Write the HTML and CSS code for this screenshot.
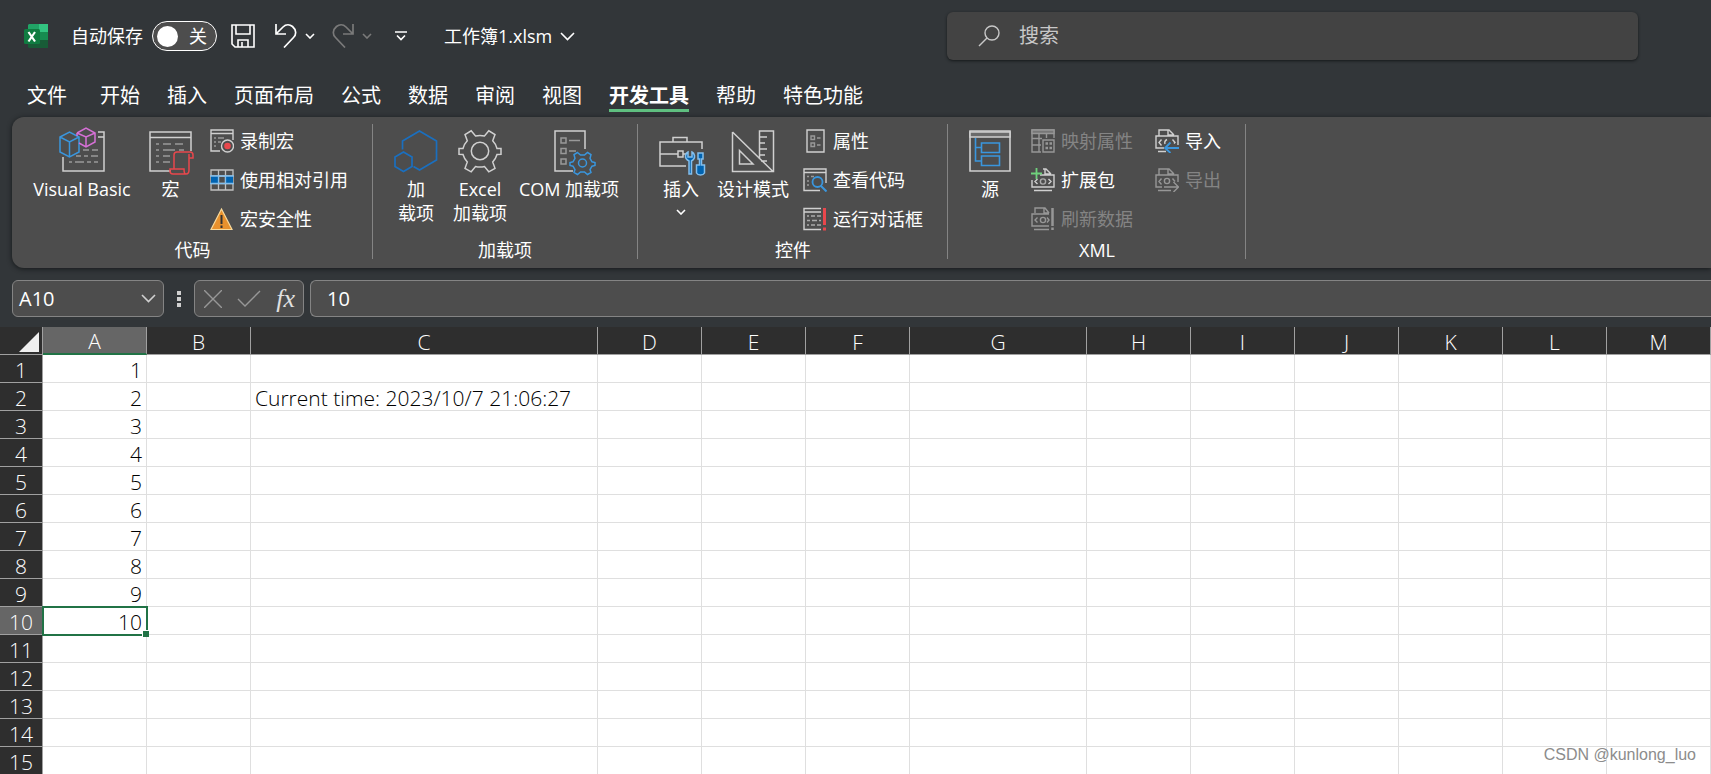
FILE: index.html
```html
<!DOCTYPE html>
<html lang="zh-CN">
<head>
<meta charset="utf-8">
<title>工作簿1.xlsm - Excel</title>
<link rel="stylesheet" href="styles.css">
</head>
<body>
<svg class="defs" aria-hidden="true">
  <symbol id="chev" viewBox="0 0 10 6"><path d="M1 1l4 4 4-4" fill="none" stroke="currentColor" stroke-width="1.6"/></symbol>
</svg>
<div class="app">
  <header class="titlebar">
    <div class="quick">
      <svg class="logo" viewBox="0 0 24 24"><path d="M5 0h10v8H4V1z" fill="#21a366"/><path d="M15 0h9v8h-9z" fill="#33c481"/><path d="M4 8h11v8H4z" fill="#107c41"/><path d="M15 8h9v8h-9z" fill="#21a366"/><path d="M15 8h9v8h-9z" fill="#107c41" opacity=".6"/><path d="M4 16h20v8H5l-1-1z" fill="#185c37"/><rect y="5" width="16" height="15" rx="1.500" fill="#107c41"/><path d="M4.500 8l6.500 9.500M11 8l-6.500 9.500" stroke="#fff" stroke-width="2.200"/></svg>
      <span class="autosave-label" id="autosave">自动保存</span>
      <button class="toggle" role="switch" aria-checked="false" aria-labelledby="autosave"><span class="knob"></span>关</button>
      <button class="icon-btn save" aria-label="保存"><svg width="24" height="24" viewBox="0 0 24 24" fill="none" stroke="#fff" stroke-width="1.600"><path d="M1 1h22v22H4l-3-3zM5 1v9h14V1M7 23v-7h10v7M11 18v5"/></svg></button>
      <button class="icon-btn" aria-label="撤消"><svg width="22" height="24" viewBox="0 0 22 24" fill="none" stroke="#fff" stroke-width="1.700"><path d="M1 0v10h10M1 10l7-7c3-3 7-2.500 9.500-.5 4 3.500 4 8 1 11L9 23.500"/></svg></button>
      <button class="icon-btn mini" aria-label="撤消选项"><svg width="10" height="6"><use href="#chev"/></svg></button>
      <button class="icon-btn dim redo" aria-label="恢复" disabled><svg width="22" height="24" viewBox="0 0 22 24" fill="none" stroke="currentColor" stroke-width="1.700"><path d="M21 0v10H11M21 10l-7-7c-3-3-7-2.500-9.500-.5-4 3.500-4 8-1 11l9.500 10"/></svg></button>
      <button class="icon-btn dim mini" aria-label="恢复选项" disabled><svg width="10" height="6"><use href="#chev"/></svg></button>
      <button class="icon-btn customize" aria-label="自定义"><svg width="12" height="10" viewBox="0 0 12 10" fill="none" stroke="#fff" stroke-width="1.600"><path d="M0 1h12M2 4.500l4 4 4-4"/></svg></button>
      <button class="filename">工作簿1.xlsm<svg width="15" height="9" viewBox="0 0 15 9" fill="none" stroke="#fff" stroke-width="1.600"><path d="M1 1l6.500 6.500L14 1"/></svg></button>
    </div>
    <label class="search"><svg width="22" height="22" viewBox="0 0 22 22" fill="none" stroke="#c8c8c8" stroke-width="1.400"><circle cx="14" cy="8" r="7"/><path d="M9 13l-8 8"/></svg><input type="text" placeholder="搜索" aria-label="搜索"></label>
  </header>
  <nav class="tabs">
    <button class="file">文件</button><button>开始</button><button>插入</button><button>页面布局</button><button>公式</button><button>数据</button><button>审阅</button><button>视图</button><button class="active">开发工具</button><button>帮助</button><button>特色功能</button>
  </nav>
  <section class="ribbon">
    <div class="group">
      <div class="tools">
        <button class="big w-xl"><svg viewBox="0 0 46 46" fill="none" stroke-width="1.500"><path d="M39 5h6v39H4V30M39 10h6" stroke="#d0d0d0"/><path d="M33 23h6M25 29h4M32 29h7M17 29h5M10 35h3M16 35h9M28 35h4M35 35h4M24 23h6" stroke="#999"/><path d="M1 10l9.500-5 9.500 5v15l-9.500 5L1 25zM1 10l9.500 5 9.500-5M10.500 15v15" stroke="#3a96dd"/><path d="M18 6l9-5 9 5v9l-9 5-7-4M18 6v3M18 6l9 4 9-4M27 10v10" stroke="#d670d6"/></svg>Visual Basic</button>
        <button class="big w-s"><svg viewBox="0 0 46 46" fill="none" stroke-width="1.500"><path d="M23 44H2V5h41v19M2 10.500h41" stroke="#d0d0d0"/><path d="M8 17h3M15 17h8M27 17h8M8 23h3M15 23h12M31 23h5M8 29h3M15 29h7M8 35h3M15 35h7" stroke="#999"/><path d="M26 42V28q0-3 3-3h13q3 0 3 3v3h-4v12q0 4-3 4H25q-3 0-3-3v-2h14q0 5 2 5M41 31v-4" stroke="#e8474c"/></svg>宏</button>
        <div class="stack">
          <button class="small"><svg viewBox="0 0 24 24" fill="none"><path d="M10 22H1V1h22v10M1 4.500h22" stroke="#d0d0d0" stroke-width="1.400"/><path d="M4 9h2M8 9h6M4 13h2M8 13h3M4 17h2" stroke="#999" stroke-width="1.300"/><circle cx="17.500" cy="17" r="6" stroke="#d0d0d0" stroke-width="1.400"/><circle cx="17.500" cy="17" r="3.300" fill="#e8474c"/></svg>录制宏</button>
          <button class="small"><svg viewBox="0 0 24 24" fill="none"><path d="M1 2h22v20H1zM8.500 2v20M15.500 2v20M1 8h22M1 15.500h22" stroke="#c0c0c0" stroke-width="1.300"/><path d="M1 8h7.500v7.500H1zM15.500 8H23v7.500h-7.500z" fill="#0063b1"/><path d="M0 8h24M0 15.500h24M8.500 8v7.500M15.500 8v7.500" stroke="#83beec" stroke-width="1.300"/></svg>使用相对引用</button>
          <button class="small"><svg viewBox="0 0 24 24"><path d="M11.500 2L22 22.500H1z" fill="#e8912d" stroke="#f8d99b" stroke-width="1.200"/><path d="M11.500 8v9M11.500 18.500v2.500" stroke="#333" stroke-width="2"/></svg>宏安全性</button>
        </div>
      </div>
      <div class="caption">代码</div>
    </div>
    <div class="group">
      <div class="tools">
        <button class="big"><svg viewBox="0 0 46 46" fill="none" stroke="#1a6fbf" stroke-width="1.700"><path d="M9.500 22.500V14L26.500 4 43.500 14v19l-17 10-6-3.500M2 30l8.500-5 8.500 5v9.500l-8.500 5-8.500-5z"/></svg>加<br>载项</button>
        <button class="big"><svg viewBox="0 0 46 46" fill="none" stroke="#d0d0d0" stroke-width="1.500"><circle cx="23" cy="24" r="8.700"/><path d="M14.200 3.800L18.500 9q4.500-1.200 9 0l4.300-5.200 6.200 3.700-2.300 6.300q3.200 3.300 4.300 7.700h4v5.700l-4 .3q-1.200 4.200-4.300 7.500l2.300 6.300-6.200 3.500-4.300-5.300q-4.500 1.200-9 0l-4.300 5.300L8 41.300l2.300-6.300q-3.100-3.300-4.300-7.500l-4-.3v-5.700h4q1.100-4.400 4.300-7.700L8 7.500z"/></svg>Excel<br>加载项</button>
        <button class="big w-l"><svg viewBox="-6 0 46 46" fill="none" stroke-width="1.500"><path d="M21 44H3V4h30v18" stroke="#d0d0d0"/><path d="M9 11h5v5H9zM9 21.500h5v5H9zM9 32h5v5H9zM17 13.500h11M17 24h7" stroke="#999"/><g stroke="#3a96dd"><circle cx="30.500" cy="36" r="4"/><path d="M25.500 25.500l3 2.500h4l3-2.500 3.500 2-1 4 2 3.300 3 .7v3l-3 .7-2 3.300 1 3-3.500 2-3-2.500h-4l-3 2.500-3.500-2 1-3-2-3.300-3-.7v-3l3-.7 2-3.300-1-4z"/></g></svg>COM 加载项</button>
      </div>
      <div class="caption">加载项</div>
    </div>
    <div class="group">
      <div class="tools">
        <button class="big"><svg viewBox="0 0 46 46" fill="none" stroke-width="1.500"><path d="M28 39H2V15h42v7M2 27h18M25 27h3M15 15v-4.500h14V15M20 24h5v6h-5z" stroke="#d0d0d0"/><path d="M31 47V34q-4-2-3.500-5.500.5-2.500 2.500-3.500v5h4v-5q2 1 2.500 3.500Q37 32 33.500 34v13z" fill="#0063b1" stroke="#83beec"/><path d="M40 26h5v6h-1.500v6h3v8q-1 2-4 2t-4-2v-8h3v-6H40z" fill="#0063b1" stroke="#83beec"/></svg>插入<svg class="drop" viewBox="0 0 10 6"><use href="#chev"/></svg></button>
        <button class="big w-m"><svg viewBox="0 0 46 46" fill="none" stroke="#d0d0d0" stroke-width="1.500"><path d="M2.500 5v39.500h41V4h-14v28M2.500 5L43 44.500M9.500 23.500V37H23zM30 10h7M30 16h5M30 22h7M30 28h5M31 34h6"/></svg>设计模式</button>
        <div class="stack">
          <button class="small"><svg viewBox="0 0 24 24" fill="none"><path d="M4 1h17v22H4z" stroke="#d0d0d0" stroke-width="1.400"/><path d="M8 7h3.500v3.500H8zM8 14h3.500v3.500H8zM14 9h3.500M14 16h3.500" stroke="#999" stroke-width="1.400"/></svg>属性</button>
          <button class="small"><svg viewBox="0 0 24 24" fill="none"><path d="M17 22.500H1V1h22v14M1 4.500h22" stroke="#d0d0d0" stroke-width="1.400"/><path d="M4 8.500h2M8 8.500h3M4 13h2M4 17h2" stroke="#999" stroke-width="1.400"/><circle cx="14.500" cy="14" r="5" stroke="#3a96dd" stroke-width="1.800"/><path d="M18 18l5.500 5.500" stroke="#3a96dd" stroke-width="2"/></svg>查看代码</button>
          <button class="small"><svg viewBox="0 0 24 24" fill="none"><path d="M18 22.500H1V1.500h17M1 5h17" stroke="#d0d0d0" stroke-width="1.400"/><path d="M4 9h2M8 9h4M14 9h4M4 13.500h3M9 13.500h5M16 13.500h2M4 18h2M8 18h4M14 18h4" stroke="#aaa" stroke-width="1.300"/><path d="M21.500 1v17M21.500 20.500v3" stroke="#e8474c" stroke-width="3"/></svg>运行对话框</button>
        </div>
      </div>
      <div class="caption">控件</div>
    </div>
    <div class="group">
      <div class="tools">
        <button class="big w-source"><svg viewBox="0 0 46 46" fill="none" stroke-width="1.600"><path d="M3 4h40v40H3z" stroke="#d0d0d0"/><path d="M3 5h40v5H3z" fill="#6b6b6b" stroke="#d0d0d0"/><path d="M8.500 11v23H14M8.500 20.500H14M14.500 16h18v9.500h-18zM14.500 29h18v9.500h-18z" stroke="#3a96dd"/></svg>源</button>
        <div class="stack">
          <button class="small" disabled><svg viewBox="0 0 24 24" fill="none" stroke="#979797" stroke-width="1.400"><path d="M10 23H1V1h22v8M1 9.500h10M1 16h9M8 4v19M15.500 4v5M12 11h11v12H12z"/><path d="M1 1h22v3.500H1z" fill="#777"/><path d="M14.500 14.500h2.500M18.500 14.500h2.500M14.500 19h2.500M18.500 19h2.500" stroke-width="2.500"/></svg>映射属性</button>
          <button class="small"><svg viewBox="0 0 24 24" class="xml-on"><path d="M12 1h3l5 5M14 1v5h6M1 12v7h22V7H9M3 22.500h18M6.500 11L4 13.500 6.500 16M17.500 11l2.500 2.500-2.500 2.500" fill="none" stroke="currentColor" stroke-width="1.400"/><circle cx="12" cy="13.500" r="2.600" fill="none" stroke="#aaa" stroke-width="1.400"/><path d="M5.500 0v11M0 5.500h11" stroke="#6fd17c" stroke-width="1.800"/></svg>扩展包</button>
          <button class="small" disabled><svg viewBox="0 0 24 24" fill="none" stroke="#979797" stroke-width="1.400"><path d="M4 6V1h10l4 5M13 1v5h5M18 7H1v12h17M3 22.500h15M6.500 10.500L4 13l2.500 2.500M16 10.500l2 2.500-2 2.500"/><circle cx="12" cy="13" r="2.600"/><path d="M21.500 1v18M21.500 20.500V23" stroke-width="2.500"/></svg>刷新数据</button>
        </div>
        <div class="stack second">
          <button class="small"><svg viewBox="0 0 24 24" fill="none" stroke="#d0d0d0" stroke-width="1.400"><path d="M4 7V1h10l5 5M13 1v5h6M9 19H1V7h22v9M3 22.500h8M6.500 10.500L4 13.500l2.500 3M10 15q-1-3 2-4.500M17.500 10.500l2.500 3-1 1"/><path d="M24 19H10.500M15.500 13.500L10 19l5.500 5" stroke="#3a96dd" stroke-width="1.800"/></svg>导入</button>
          <button class="small" disabled><svg viewBox="0 0 24 24" fill="none" stroke="#979797" stroke-width="1.400"><path d="M4 7V1h10l5 5M13 1v5h6M7 19H1V7h22v7M3 22.500h13M6.500 10.500L4 13.500l2.500 3M17.500 10.500l2.500 3"/><circle cx="12" cy="13" r="2.600"/><path d="M9 19h14M18.500 14l5 5-5 5"/></svg>导出</button>
        </div>
      </div>
      <div class="caption">XML</div>
    </div>
  </section>
  <section class="formula-bar">
    <button class="namebox">A10<svg width="15" height="9" viewBox="0 0 15 9" fill="none" stroke="#d0d0d0" stroke-width="1.600"><path d="M1 1l6.500 6.500L14 1"/></svg></button>
    <svg class="grip" width="4" height="16" viewBox="0 0 4 16"><path d="M0 0h4v4H0zM0 6h4v4H0zM0 12h4v4H0z" fill="#d0d0d0"/></svg>
    <div class="entry">
      <button aria-label="取消"><svg width="18" height="18" viewBox="0 0 18 18" fill="none" stroke="#979797" stroke-width="1.400"><path d="M0 0l18 18M18 0L0 18"/></svg></button>
      <button aria-label="输入"><svg width="24" height="18" viewBox="0 0 24 18" fill="none" stroke="#979797" stroke-width="1.400"><path d="M1 9l7 7L23 1"/></svg></button>
      <button class="fx" aria-label="插入函数">fx</button>
    </div>
    <input class="formula" type="text" value="10" aria-label="编辑栏">
  </section>
  <main class="sheet">
    <table>
      <colgroup><col class="c-row"><col class="c-std"><col class="c-std"><col class="c-wide"><col class="c-std"><col class="c-std"><col class="c-std"><col class="c-mid"><col class="c-std"><col class="c-std"><col class="c-std"><col class="c-std"><col class="c-std"><col class="c-std"></colgroup>
      <thead><tr><th class="corner"><svg width="20" height="20" viewBox="0 0 20 20"><path d="M20 0v20H0z" fill="#f0f0f0"/></svg></th><th class="sel">A</th><th>B</th><th>C</th><th>D</th><th>E</th><th>F</th><th>G</th><th>H</th><th>I</th><th>J</th><th>K</th><th>L</th><th>M</th></tr></thead>
      <tbody>
        <tr><th>1</th><td class="num">1</td><td></td><td></td><td></td><td></td><td></td><td></td><td></td><td></td><td></td><td></td><td></td><td></td></tr>
        <tr><th>2</th><td class="num">2</td><td></td><td>Current time: 2023/10/7 21:06:27</td><td></td><td></td><td></td><td></td><td></td><td></td><td></td><td></td><td></td><td></td></tr>
        <tr><th>3</th><td class="num">3</td><td></td><td></td><td></td><td></td><td></td><td></td><td></td><td></td><td></td><td></td><td></td><td></td></tr>
        <tr><th>4</th><td class="num">4</td><td></td><td></td><td></td><td></td><td></td><td></td><td></td><td></td><td></td><td></td><td></td><td></td></tr>
        <tr><th>5</th><td class="num">5</td><td></td><td></td><td></td><td></td><td></td><td></td><td></td><td></td><td></td><td></td><td></td><td></td></tr>
        <tr><th>6</th><td class="num">6</td><td></td><td></td><td></td><td></td><td></td><td></td><td></td><td></td><td></td><td></td><td></td><td></td></tr>
        <tr><th>7</th><td class="num">7</td><td></td><td></td><td></td><td></td><td></td><td></td><td></td><td></td><td></td><td></td><td></td><td></td></tr>
        <tr><th>8</th><td class="num">8</td><td></td><td></td><td></td><td></td><td></td><td></td><td></td><td></td><td></td><td></td><td></td><td></td></tr>
        <tr><th>9</th><td class="num">9</td><td></td><td></td><td></td><td></td><td></td><td></td><td></td><td></td><td></td><td></td><td></td><td></td></tr>
        <tr><th class="sel">10</th><td class="num current">10<span class="handle"></span></td><td></td><td></td><td></td><td></td><td></td><td></td><td></td><td></td><td></td><td></td><td></td><td></td></tr>
        <tr><th>11</th><td></td><td></td><td></td><td></td><td></td><td></td><td></td><td></td><td></td><td></td><td></td><td></td><td></td></tr>
        <tr><th>12</th><td></td><td></td><td></td><td></td><td></td><td></td><td></td><td></td><td></td><td></td><td></td><td></td><td></td></tr>
        <tr><th>13</th><td></td><td></td><td></td><td></td><td></td><td></td><td></td><td></td><td></td><td></td><td></td><td></td><td></td></tr>
        <tr><th>14</th><td></td><td></td><td></td><td></td><td></td><td></td><td></td><td></td><td></td><td></td><td></td><td></td><td></td></tr>
        <tr><th>15</th><td></td><td></td><td></td><td></td><td></td><td></td><td></td><td></td><td></td><td></td><td></td><td></td><td></td></tr>
      </tbody>
    </table>
    <div class="watermark">CSDN @kunlong_luo</div>
  </main>
</div>
</body>
</html>
```
FILE: styles.css
```css
* { box-sizing: border-box; }
body {
  margin: 0;
  background: #323639;
  color: #fff;
  font: 18px/24px "Open Sans", "Noto Sans CJK SC", sans-serif;
}
button, input { font: inherit; color: inherit; background: none; border: 0; padding: 0; margin: 0; }
svg { display: block; flex: none; }
.defs { position: absolute; width: 0; height: 0; }
.app { height: 100vh; overflow: hidden; display: flex; flex-direction: column; }

.titlebar { display: flex; justify-content: space-between; align-items: center; padding: 12px 73px 0 24px; }
.quick { display: flex; align-items: center; }
.logo { width: 24px; height: 24px; }
.autosave-label { margin-left: 23px; }
.toggle {
  display: flex; align-items: center; justify-content: space-between;
  width: 65px; height: 30px; margin-left: 9px; padding: 0 9px 0 4px;
  border: 1px solid #fff; border-radius: 15px; background: #4d4d4d;
}
.knob { width: 21px; height: 21px; border-radius: 50%; background: #fff; }
.icon-btn { display: flex; align-items: center; margin-left: 8px; }
.save { margin: 0 12px 0 14px; }
.redo { margin-left: 17px; }
.customize { margin-left: 23px; }
.dim { color: #7a7a7a; }
.filename { display: flex; align-items: center; gap: 8px; margin-left: 37px; }
.search {
  display: flex; align-items: center; gap: 19px;
  width: 691px; height: 48px; padding: 0 31px;
  border-radius: 6px; background: #434343; box-shadow: 0 1px 3px #15181a;
}
.search input { flex: 1; min-width: 0; font-size: 20px; outline: 0; }
.search input::placeholder { color: #c8c8c8; opacity: 1; }

.tabs { display: flex; gap: 27px; padding: 22px 27px 5px; }
.tabs button { font-size: 20px; line-height: 27px; border-bottom: 3px solid transparent; white-space: nowrap; }
.tabs .file { margin-right: 6px; }
.tabs .active { font-weight: 700; border-color: #5fbf80; }

.ribbon {
  display: flex; margin-left: 12px; padding: 7px 0 9px;
  border-radius: 12px 0 0 12px; background: #4d4d4d; box-shadow: 0 1px 5px #15181a;
}
.group { display: flex; flex-direction: column; gap: 5px; padding: 0 24px 0 13px; border-right: 1px solid #848484; }
.group:nth-child(2) { padding-right: 13px; }
.tools { display: flex; gap: 4px; height: 112px; }
.caption { padding-left: 12px; text-align: center; line-height: 18px; }
.group:nth-child(2) .caption { padding-left: 0; }
.big { padding-top: 3px; width: 60px; white-space: nowrap; align-self: flex-start; }
.big svg { width: 46px; height: 46px; margin: 0 auto 4px; overflow: visible; }
.big .drop { width: 10px; height: 6px; margin: 8px auto 0; }
.w-xl { width: 114px; }
.w-l { width: 110px; }
.w-m { width: 76px; }
.w-s { width: 55px; }
.w-source { width: 58px; }
.stack { display: flex; flex-direction: column; gap: 5px; margin-left: 8px; }
.second { margin-left: 18px; }
.small { display: flex; align-items: center; gap: 6px; height: 34px; white-space: nowrap; }
.small svg { width: 24px; height: 24px; }
.small:disabled { color: #848484; }
.xml-on { color: #d0d0d0; }

.formula-bar { display: flex; align-items: center; padding: 12px 0 10px 12px; }
.namebox, .entry, .formula { height: 37px; border: 1px solid #848484; border-radius: 6px; background: #4d4d4d; }
.namebox, .formula { font-size: 20px; }
.namebox { display: flex; align-items: center; justify-content: space-between; width: 152px; padding: 0 7px 0 6px; }
.grip { margin: 0 13px; }
.entry { display: flex; align-items: center; justify-content: space-between; width: 110px; padding: 0 8px 0 9px; margin-right: 6px; }
.fx { font: italic 26px/30px "Liberation Serif", serif; color: #e0e0e0; }
.formula { flex: 1; min-width: 0; padding: 0 16px; border-right: 0; border-radius: 6px 0 0 6px; outline: 0; }

.sheet { position: relative; flex: 1; min-height: 0; overflow: hidden; background: #fff; color: #000; }
table { width: 100%; table-layout: fixed; border-collapse: separate; border-spacing: 0; font: 300 21px/24px "Open Sans", "Noto Sans CJK SC", sans-serif; }
.c-row { width: 43px; }
.c-std { width: 104px; }
.c-wide { width: 347px; }
.c-mid { width: 177px; }
th, td { height: 28px; padding: 2px 4px 0; border-right: 1px solid #dfdfdf; border-bottom: 1px solid #dfdfdf; white-space: nowrap; }
th { padding: 2px 0 0; background: #2e2e2e; color: #fff; font-weight: 300; border-color: #a0a0a0; }
.sel { background: #666; }
thead .sel { border-bottom: 2px solid #217346; }
.corner svg { margin-left: 19px; }
.num { text-align: right; }
.current { position: relative; outline: 2px solid #217346; outline-offset: -1px; }
.handle { position: absolute; right: -3px; bottom: -3px; width: 7px; height: 7px; background: #217346; border: solid #fff; border-width: 1px 0 0 1px; }
.watermark { position: absolute; right: 15px; bottom: 7px; font: 16px/24px "Liberation Sans", sans-serif; color: #8c8c8c; }
```
